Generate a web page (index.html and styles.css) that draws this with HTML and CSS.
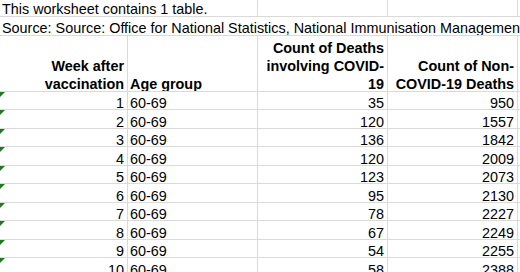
FILE: index.html
```html
<!DOCTYPE html>
<html lang="en">
<head>
<meta charset="utf-8">
<title>Worksheet</title>
<link rel="stylesheet" href="styles.css">
</head>
<body>
<div class="sheet">
  <div class="c l span2">This worksheet contains 1 table.</div>
  <div class="c"></div>
  <div class="c"></div>
  <div class="c"></div>

  <div class="c l span5">Source: Source: Office for National Statistics, National Immunisation Management System</div>

  <div class="c h r"><span class="t">Week after<br>vaccination</span></div>
  <div class="c h l"><span class="t">Age group</span></div>
  <div class="c h r"><span class="t">Count of Deaths<br>involving COVID-<br>19</span></div>
  <div class="c h r"><span class="t">Count of Non-<br>COVID-19 Deaths</span></div>
  <div class="c"></div>

  <div class="c d r tri">1</div><div class="c d l">60-69</div><div class="c d r">35</div><div class="c d r">950</div><div class="c"></div>
  <div class="c d r tri">2</div><div class="c d l">60-69</div><div class="c d r">120</div><div class="c d r">1557</div><div class="c"></div>
  <div class="c d r tri">3</div><div class="c d l">60-69</div><div class="c d r">136</div><div class="c d r">1842</div><div class="c"></div>
  <div class="c d r tri">4</div><div class="c d l">60-69</div><div class="c d r">120</div><div class="c d r">2009</div><div class="c"></div>
  <div class="c d r tri">5</div><div class="c d l">60-69</div><div class="c d r">123</div><div class="c d r">2073</div><div class="c"></div>
  <div class="c d r tri">6</div><div class="c d l">60-69</div><div class="c d r">95</div><div class="c d r">2130</div><div class="c"></div>
  <div class="c d r tri">7</div><div class="c d l">60-69</div><div class="c d r">78</div><div class="c d r">2227</div><div class="c"></div>
  <div class="c d r tri">8</div><div class="c d l">60-69</div><div class="c d r">67</div><div class="c d r">2249</div><div class="c"></div>
  <div class="c d r tri">9</div><div class="c d l">60-69</div><div class="c d r">54</div><div class="c d r">2255</div><div class="c"></div>
  <div class="c d r tri">10</div><div class="c d l">60-69</div><div class="c d r">58</div><div class="c d r">2388</div><div class="c"></div>
</div>
</body>
</html>
```
FILE: styles.css
```css
html, body {
  margin: 0;
  padding: 0;
  overflow: hidden;
  background: #ffffff;
}

.sheet {
  display: grid;
  grid-template-columns: 128px 130px 130px 130px 2px;
  grid-template-rows: 17px 19px 56px 18px 19px 18px 19px 18px 19px 18px 19px 18px 19px;
  font-family: "Liberation Sans", Arial, sans-serif;
  font-size: 14.4px;
  color: #000000;
  width: 520px;
}

.c {
  position: relative;
  box-sizing: border-box;
  border-right: 1px solid #dadada;
  border-bottom: 1px solid #dadada;
  display: flex;
  flex-direction: column;
  justify-content: flex-end;
  padding: 0 3px 0 3px;
  line-height: 14px;
  white-space: nowrap;
  overflow: hidden;
}

.d { line-height: 12px; }

.span2 { grid-column: span 2; }
.span5 { grid-column: span 5; border-right: none; }

.l { text-align: left; padding-left: 2px; }
.r { text-align: right; }

.h {
  font-weight: bold;
  line-height: 18px;
}

.t {
  display: block;
  margin-bottom: -2px;
}

.tri::before {
  content: "";
  position: absolute;
  top: 0;
  left: 0;
  border-top: 5px solid #1e7a1e;
  border-right: 5px solid transparent;
}
```
